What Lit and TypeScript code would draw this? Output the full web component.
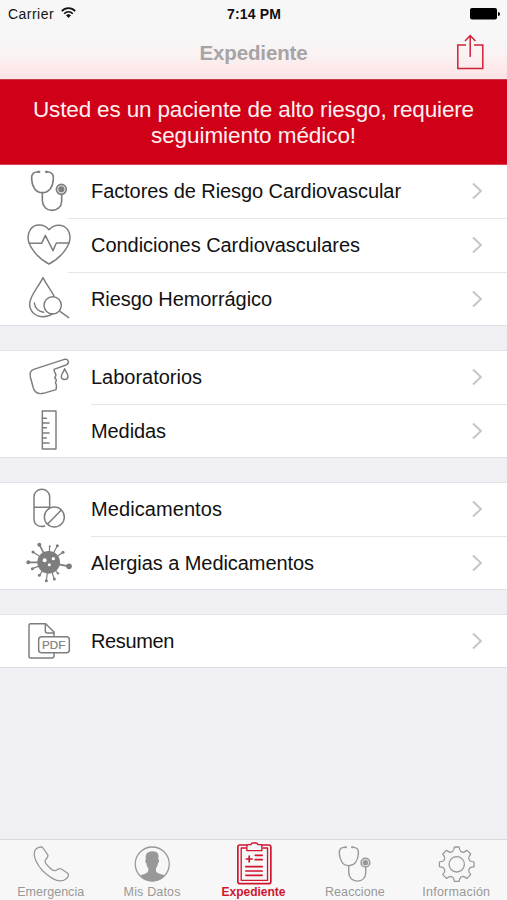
import { LitElement, html, svg, css, TemplateResult, SVGTemplateResult } from "lit";
import { customElement, property } from "lit/decorators.js";

const stethoscope = svg`
  <g stroke-width="4.800">
    <path d="M115 36 L110 36 C99 37 94 44 95 57 C96 80 107 98 127 98 C148 98 159 80 160 57 C161 44 155 37 145 36 L140 36"/>
    <path d="M127 98 V122 C128 140 140 151 155 151 C172 151 184 141 185 124 V104"/>
    <path d="M115 35.500 H118 M138 35.500 H141" stroke-width="6.500"/>
    <circle cx="184" cy="88" r="15" class="tint"/>
  </g>
  <circle cx="184" cy="88" r="9" class="solid"/>`;

interface Row {
  label: string;
  width: number;
  viewBox: string;
  icon: SVGTemplateResult;
}

const virusArms = [
  [118, 209, 6], [149, 214, 3], [172, 212, 4.5], [189, 232, 4.5], [99, 231, 4.5], [85, 262, 6],
  [97, 281, 4.5], [118, 301, 4.5], [139, 317, 4.5], [163, 312, 4.5], [174, 295, 3.5], [207, 274, 8.5],
];

const groups: Row[][] = [
  [
    { label: "Factores de Riesgo Cardiovascular", width: 310, viewBox: "0 15 273 159", icon: stethoscope },
    {
      label: "Condiciones Cardiovasculares", width: 269, viewBox: "0 177 273 159",
      icon: svg`
        <path d="M147 209 C131 190 103 191 91 209 C80 226 84 249 98 269 C111 288 129 303 147 312 C165 303 184 287 197 268 C211 247 214 225 203 209 C190 191 163 191 147 209Z"/>
        <path d="M87 250 H125 L136 226 L159 272 L169 249 H207" />`,
    },
    {
      label: "Riesgo Hemorrágico", width: 181, viewBox: "0 339 273 159",
      icon: svg`
        <path d="M162 408 C154 391 141 377 129 353 C115 382 89 407 89 432 C89 455 107 470 129 470 C142 470 152 466 159 461"/>
        <circle cx="158" cy="436" r="26"/>
        <path d="M180 454 L206 473"/>
        <path d="M103 429 C105 445 115 454 131 457"/>`,
    },
  ],
  [
    {
      label: "Laboratorios", width: 111, viewBox: "0 33 273 159",
      icon: svg`
        <path d="M101 88 L193 58 C206 55 210 70 198 75 L162 88 L164 97 C169 103 169 108 164 113 C170 118 170 123 166 128 C170 133 170 141 168 149 L130 160 C115 163 104 157 100 144 L91 111 C88 98 91 92 101 88Z"/>
        <path d="M194 86 C191 96 184 101 184 109 C184 122 204 122 204 109 C204 101 197 96 194 86Z"/>`,
    },
    {
      label: "Medidas", width: 75, viewBox: "0 195 273 159",
      icon: svg`
        <path d="M127 213 H168 V327 H127Z"/>
        <path d="M128 235 H139 M128 249 H147 M128 263 H139 M128 279 H147 M128 294 H139 M128 309 H147"/>`,
    },
  ],
  [
    {
      label: "Medicamentos", width: 131, viewBox: "0 24 273 159",
      icon: svg`
        <path d="M149 97 V66 C149 35 102 35 102 66 V132 C102 149 117 158 134 153 M102 97 H149"/>
        <circle cx="163" cy="126" r="30"/>
        <path d="M142 148 L184 105"/>`,
    },
    {
      label: "Alergias a Medicamentos", width: 223, viewBox: "0 186 273 159",
      icon: svg`
        ${virusArms.map(([x, y, r]) => svg`<path d="M146 262 L${x} ${y}" stroke-width=${r > 5 ? 5 : 3.5}/><circle class="solid" cx=${x} cy=${y} r=${r}/>`)}
        <circle class="solid" cx="146" cy="262" r="34"/>
        <circle class="hole" cx="134" cy="256" r="6"/>
        <circle class="hole" cx="160" cy="251" r="5"/>
        <circle class="hole" cx="148" cy="269" r="4.5"/>`,
    },
  ],
  [
    {
      label: "Resumen", width: 83, viewBox: "0 420 273 159",
      icon: svg`
        <path d="M162 484 V471 L137 446 H92 Q87 446 87 451 V543 Q87 549 92 549 H156 Q162 549 162 543 V533"/>
        <path d="M136 447 V467 Q136 474 142 474 H162"/>
        <rect x="116" y="485" width="92" height="48" rx="9"/>
        <text x="126" y="522" textLength="70" lengthAdjust="spacingAndGlyphs">PDF</text>`,
    },
  ],
];

interface Tab {
  label: string;
  width: number;
  active?: boolean;
  icon: SVGTemplateResult;
}

const tabs: Tab[] = [
  {
    label: "Emergencia", width: 67,
    icon: svg`<path d="M107 56 C114 50 124 46 129 52 L143 72 C147 78 140 83 136 88 C133 94 139 102 147 109 C155 117 163 123 169 119 C173 115 178 112 184 115 L202 127 C209 132 205 140 197 146 C186 154 171 151 157 143 C137 131 118 113 108 91 C102 77 101 63 107 56Z"/>`,
  },
  {
    label: "Mis Datos", width: 57,
    icon: svg`
      <circle cx="458" cy="100" r="51"/>
      <path class="solid" d="M422 136 C424 130 446 130 446 120 V113 C442 108 441 103 440 98 C436 95 436 88 439 86 C436 70 443 62 459 62 C475 62 479 70 476 86 C480 88 479 96 475 98 C474 104 473 109 469 113 V121 C470 130 492 130 495 136 C476 157 440 157 422 136Z"/>`,
  },
  {
    label: "Expediente", width: 64, active: true,
    icon: svg`
      <rect x="713" y="43" width="99" height="116" rx="6" stroke-width="5"/>
      <path d="M737 52 H723 V149 H802 V52 H788" stroke-width="4"/>
      <path d="M740 60 V46 Q740 42 744 42 H752 Q753 37 758 37 H767 Q772 37 773 42 H781 Q785 42 785 46 V60Z" class="tab-fill" stroke-width="4"/>
      <path d="M738 85 H756 M747 76 V94 M765 74 H786 M765 87 H786 M737 108 H786 M737 121 H786 M737 134 H786" stroke-width="5"/>`,
  },
  {
    label: "Reaccione", width: 60,
    icon: svg`<g transform="translate(935 18.5) scale(.88)">${stethoscope}</g>`,
  },
  {
    label: "Información", width: 68,
    icon: svg`
      <circle cx="1369" cy="101" r="23"/>
      <path d="M1362 49 H1376 Q1378 60 1381 62 Q1386 65 1389 65 L1400 59 L1411 70 Q1404 79 1405 83 Q1407 89 1409 91 L1421 94 V108 L1409 111 Q1406 115 1405 119 Q1404 123 1411 132 L1400 143 L1389 137 Q1386 137 1381 140 Q1378 142 1376 152 H1362 Q1360 142 1357 140 Q1352 137 1349 137 L1338 143 L1327 132 Q1334 123 1333 119 Q1331 113 1329 111 L1317 108 V94 L1329 91 Q1331 89 1333 83 Q1334 79 1327 70 L1338 59 L1349 65 Q1352 65 1357 62 Q1360 60 1362 49Z"/>`,
  },
];

/** One line of text set to an exact advance width. */
@customElement("fit-text")
class FitText extends LitElement {
  @property() text = "";
  @property({ type: Number }) width = 0;

  static styles = css`
    :host { display: inline-block; white-space: nowrap; }
    .line { display: inline-block; }
  `;

  render() {
    return html`<span class="line">${this.text}</span>`;
  }

  updated() {
    const line = this.renderRoot.querySelector<HTMLElement>(".line")!;
    line.style.letterSpacing = "0";
    const spare = this.width - line.getBoundingClientRect().width;
    line.style.letterSpacing = `${spare / this.text.length}px`;
  }
}

@customElement("app-root")
class AppRoot extends LitElement {
  static styles = css`
    :host {
      display: flex;
      flex-direction: column;
      width: 507px;
      height: 900px;
      overflow: hidden;
      background: #efeff4;
      color: #111;
      font-family: "Liberation Sans", Arial, sans-serif;
    }
    * { box-sizing: border-box; }
    svg { display: block; fill: none; stroke: currentColor; stroke-linejoin: round; stroke-linecap: round; }
    .header {
      height: 79px;
      flex: none;
      background: linear-gradient(#f7f7f7 0, #f7f7f7 36px, #faf2f3 54px, #fde6e8 74px, #fbe3e5 79px);
    }
    .status {
      display: grid;
      grid-template-columns: 1fr auto 1fr;
      align-items: center;
      height: 27px;
      padding: 0 7px 0 8px;
      font-size: 14px;
    }
    .carrier { display: flex; align-items: center; gap: 7px; }
    .wifi { stroke-width: 1.7; stroke-linecap: butt; margin-bottom: 2px; }
    .time { font-weight: bold; }
    .battery { justify-self: end; fill: #000; stroke: none; }
    .nav {
      display: grid;
      grid-template-columns: 1fr auto 1fr;
      align-items: center;
      height: 50px;
      padding: 0 23px;
    }
    .title { grid-column: 2; padding-top: 2px; color: #a6a4a5; font-size: 20.5px; font-weight: bold; }
    .share { justify-self: end; color: #cf2238; stroke-linejoin: miter; stroke-linecap: butt; }
    .alert {
      height: 86px;
      flex: none;
      padding-top: 17px;
      background: #d10019;
      border-top: 1px solid #c43a48;
      border-bottom: 1px solid #d54352;
      color: #fff0f0;
      font-size: 22.5px;
      line-height: 26px;
      text-align: center;
    }
    .alert-line { display: block; }
    .groups { display: flex; flex-direction: column; gap: 24px; flex: 1; }
    .group { background: #fff; border-top: 1px solid #e2e2e6; border-bottom: 1px solid #e0e0e4; }
    .group:first-child { border-top: 0; }
    .row { display: flex; height: 54px; }
    .row:last-child { height: 52px; }
    .icon { width: 91px; height: 53px; flex: none; color: #7d7d7d; stroke-width: 4.4; }
    .solid { fill: currentColor; stroke: none; }
    .tint { fill: currentColor; fill-opacity: .25; }
    .hole { fill: #fff; stroke: none; }
    .icon text { font: 31px "Liberation Sans", sans-serif; fill: #7d7d7d; stroke: #7d7d7d; stroke-width: .5; }
    .body { display: flex; flex: 1; align-items: center; justify-content: space-between; padding-right: 24px; font-size: 20px; }
    .row:not(:last-child) .body { border-bottom: 1px solid #e6e6e8; }
    .group:first-child .row:not(:last-child) .body { margin-left: -23px; padding-left: 23px; }
    .chevron { color: #c5c5c9; stroke-width: 1.9; stroke-linecap: butt; stroke-linejoin: miter; margin-bottom: 1px; }
    .tabs { display: grid; grid-template-columns: repeat(5, 1fr); height: 61px; flex: none; border-top: 1px solid #dadadd; background: #f7f7f7; }
    .tab { display: flex; flex-direction: column; align-items: center; color: #989898; font-size: 12.5px; line-height: 14px; }
    .tab svg { width: 101.4px; height: 45px; stroke-width: 3.8; }
    .tab.active { color: #d0152f; font-size: 12px; font-weight: bold; }
    .tab-fill { fill: #f7f7f7; }
  `;

  private renderRow(row: Row): TemplateResult {
    return html`
      <div class="row">
        <svg class="icon" viewBox=${row.viewBox}>${row.icon}</svg>
        <div class="body">
          <fit-text .text=${row.label} .width=${row.width}></fit-text>
          <svg class="chevron" width="12" height="18" viewBox="0 0 12 18"><path d="M2 1.5 L10 9 L2 16.5"/></svg>
        </div>
      </div>`;
  }

  render() {
    return html`
      <div class="header">
        <div class="status">
          <div class="carrier">
            <fit-text text="Carrier" width="46"></fit-text>
            <svg class="wifi" width="15" height="12" viewBox="0 0 15 12">
              <path d="M.8 4.1 C4.5 .2 10.5 .2 14.2 4.1 M3.2 6.7 C5.5 4.1 9.5 4.1 11.8 6.7"/>
              <path class="solid" d="M7.5 11 L5 8.3 Q7.5 6.3 10 8.3Z"/>
            </svg>
          </div>
          <fit-text class="time" text="7:14 PM" width="54"></fit-text>
          <svg class="battery" width="30" height="13" viewBox="0 0 30 13">
            <rect x="0" y="1" width="27" height="11.5" rx="2"/><path d="M28 5 Q30 5 30 7 Q30 9 28 9Z"/>
          </svg>
        </div>
        <div class="nav">
          <fit-text class="title" text="Expediente" width="108"></fit-text>
          <svg class="share" width="28" height="36" viewBox="0 0 28 36" stroke-width="1.5">
            <path d="M10 11 H1.8 V34.5 H26.8 V11 H18 M14.2 23 V2 M9 7 L14.2 1.6 L19.4 7"/>
          </svg>
        </div>
      </div>
      <div class="alert">
        <fit-text class="alert-line" text="Usted es un paciente de alto riesgo, requiere" width="441"></fit-text>
        <fit-text class="alert-line" text="seguimiento médico!" width="205"></fit-text>
      </div>
      <div class="groups">
        ${groups.map((rows) => html`<div class="group">${rows.map((row) => this.renderRow(row))}</div>`)}
      </div>
      <div class="tabs">
        ${tabs.map((tab, i) => html`
          <div class="tab ${tab.active ? "active" : ""}">
            <svg viewBox="${i * 304.2} 28 304.2 135">${tab.icon}</svg>
            <fit-text .text=${tab.label} .width=${tab.width}></fit-text>
          </div>`)}
      </div>`;
  }
}
